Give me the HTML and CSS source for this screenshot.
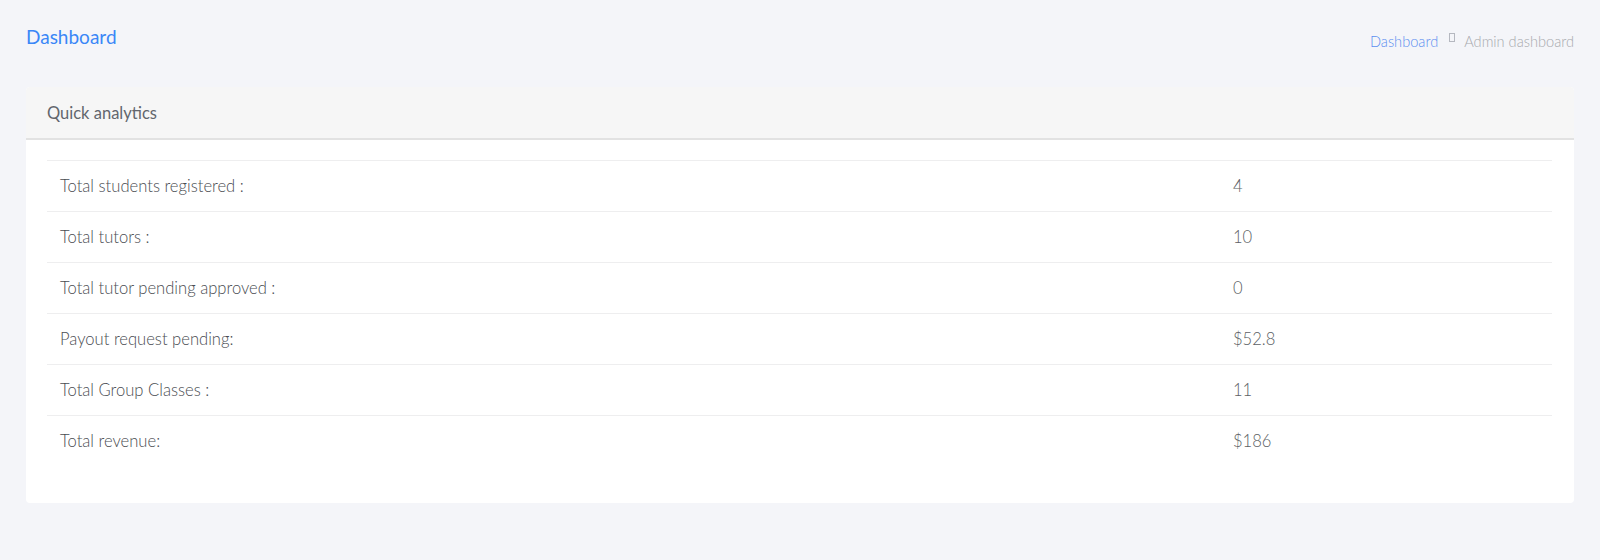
FILE: index.html
```html
<!DOCTYPE html>
<html>
<head>
<meta charset="utf-8">
<link rel="stylesheet" href="styles.css">
</head>
<body>
<div class="page">
  <div class="page-header">
    <h1 class="page-title">Dashboard</h1>
    <nav class="crumbs">
      <a class="crumb-link" href="#">Dashboard</a>
      <span class="crumb-sep"></span>
      <span class="crumb-current">Admin dashboard</span>
    </nav>
  </div>
  <div class="card">
    <div class="card-header">Quick analytics</div>
    <div class="card-body">
      <table class="stats">
        <tbody>
          <tr><td class="label">Total students registered :</td><td class="value">4</td></tr>
          <tr><td class="label">Total tutors :</td><td class="value">10</td></tr>
          <tr><td class="label">Total tutor pending approved :</td><td class="value">0</td></tr>
          <tr><td class="label">Payout request pending:</td><td class="value">$52.8</td></tr>
          <tr><td class="label">Total Group Classes :</td><td class="value">11</td></tr>
          <tr><td class="label">Total revenue:</td><td class="value">$186</td></tr>
        </tbody>
      </table>
    </div>
  </div>
</div>
</body>
</html>
```
FILE: styles.css
```css
* { box-sizing: border-box; }
html, body {
  margin: 0;
  padding: 0;
  background: #f4f5f9;
  font-family: Lato, "Open Sans", sans-serif;
}
.page {
  padding: 24px 26px;
}
.page-header {
  display: flex;
  justify-content: space-between;
  align-items: flex-start;
  height: 63px;
}
.page-title {
  margin: 0;
  padding-top: 1px;
  font-size: 19px;
  font-weight: 400;
  color: #3a87f7;
  line-height: 24px;
}
.crumbs {
  display: flex;
  align-items: center;
  padding-top: 9px;
  font-size: 14.6px;
  font-weight: 300;
  line-height: 18px;
}
.crumb-link {
  color: #5a8ef0;
  text-decoration: none;
}
.crumb-sep {
  display: inline-block;
  width: 6px;
  height: 9px;
  border: 1px solid #b5b8c0;
  margin: 0 9px 0 11px;
  position: relative;
  top: -5px;
}
.crumb-current {
  color: #a7a9ad;
}
.card {
  background: #fff;
  border-radius: 4px;
  overflow: hidden;
}
.card-header {
  background: #f6f6f6;
  border-bottom: 2px solid #e2e2e2;
  height: 53px;
  padding: 0 21px;
  display: flex;
  align-items: center;
  font-size: 16.5px;
  color: #62666d;
  font-weight: 400;
}
.card-body {
  padding: 20px 22px 36px 21px;
}
.stats {
  width: 100%;
  border-collapse: collapse;
  font-size: 16.6px;
  font-weight: 300;
  color: #4a4d52;
}
.stats td {
  border-top: 1px solid #eeeeef;
  height: 51px;
  padding: 0 13px;
  vertical-align: middle;
}
.stats td.label {
  width: 1173px;
}
.stats td.value {
  color: #5c5f64;
}
```
